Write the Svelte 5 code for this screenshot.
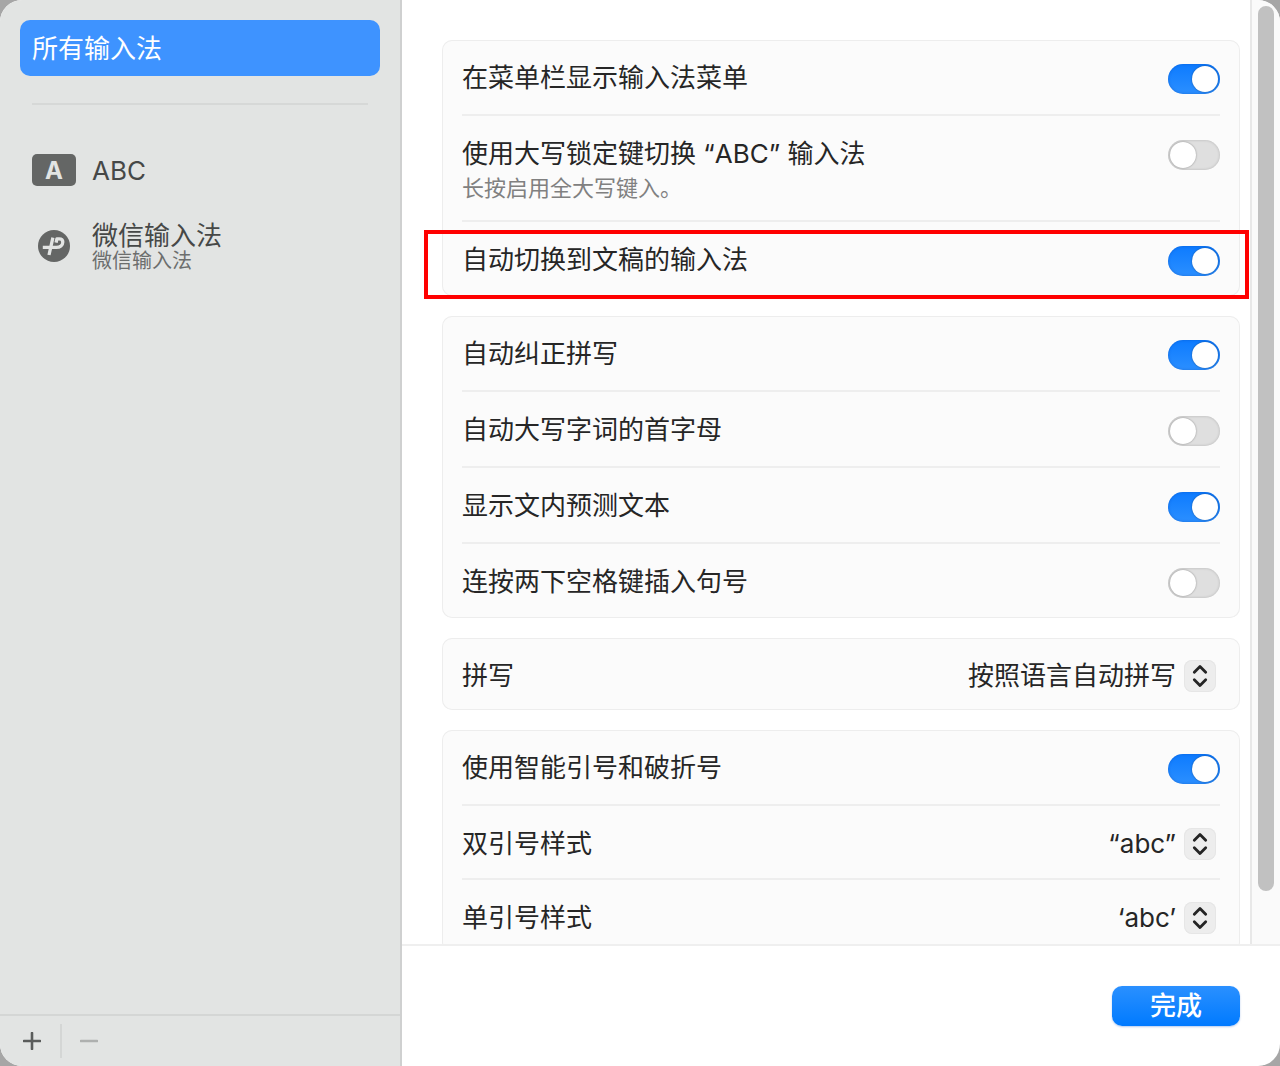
<script lang="ts">
  type Row = {
    id: string;
    label: string;
    hint?: string;
    on?: boolean;
    options?: string[];
    marked?: boolean;
  };

  let groups = $state<Row[][]>([
    [
      { id: 'menu-bar', label: '在菜单栏显示输入法菜单', on: true },
      { id: 'caps-lock', label: '使用大写锁定键切换 “ABC” 输入法', hint: '长按启用全大写键入。', on: false },
      { id: 'auto-switch', label: '自动切换到文稿的输入法', on: true, marked: true }
    ],
    [
      { id: 'auto-correct', label: '自动纠正拼写', on: true },
      { id: 'auto-capital', label: '自动大写字词的首字母', on: false },
      { id: 'inline-predict', label: '显示文内预测文本', on: true },
      { id: 'double-space', label: '连按两下空格键插入句号', on: false }
    ],
    [{ id: 'spelling', label: '拼写', options: ['按照语言自动拼写'] }],
    [
      { id: 'smart-quotes', label: '使用智能引号和破折号', on: true },
      { id: 'double-quotes', label: '双引号样式', options: ['“abc”'] },
      { id: 'single-quotes', label: '单引号样式', options: ['‘abc’'] }
    ]
  ]);
</script>

<div class="window">
  <aside class="sidebar">
    <nav class="sources">
      <button class="all">所有输入法</button>
      <hr />
      <button class="source">
        <span class="icon">
          <span class="key">A</span>
        </span>
        <span class="name">ABC</span>
      </button>
      <button class="source">
        <span class="icon">
          <svg width="32" height="32" viewBox="0 0 32 32" aria-hidden="true">
            <circle cx="16" cy="16" r="16" fill="#646665" />
            <path
              d="M14.9 7.6 L11 25 M4.8 17.4 H18.2 C22.2 17.4 24.8 15.2 24.8 12 C24.8 9.8 23.4 8.9 21.2 8.9 H18.9 L18.1 12.6"
              fill="none"
              stroke="#e2e4e3"
              stroke-width="3.3"
              stroke-linejoin="round"
            />
          </svg>
        </span>
        <span class="names">
          <span class="name">微信输入法</span>
          <span class="detail">微信输入法</span>
        </span>
      </button>
    </nav>
    <div class="tools">
      <button class="tool" aria-label="添加">
        <svg width="18" height="18" viewBox="0 0 18 18">
          <path d="M9 1V17M1 9H17" stroke="#5a5c5b" stroke-width="2.6" stroke-linecap="round" />
        </svg>
      </button>
      <button class="tool" aria-label="移除" disabled>
        <svg width="18" height="18" viewBox="0 0 18 18">
          <path d="M1 9H17" stroke="#aeb0af" stroke-width="2.6" stroke-linecap="round" />
        </svg>
      </button>
    </div>
  </aside>

  <main class="content">
    <div class="body">
      <div class="pane">
        {#each groups as group}
          <section class="card">
            {#each group as row (row.id)}
              <div class="row" class:marked={row.marked}>
                <div class="text">
                  <label for={row.id}>{row.label}</label>
                  {#if row.hint}
                    <span class="hint">{row.hint}</span>
                  {/if}
                </div>
                {#if row.options}
                  <div class="picker">
                    <select id={row.id}>
                      {#each row.options as option}
                        <option>{option}</option>
                      {/each}
                    </select>
                    <svg width="32" height="32" viewBox="0 0 32 32" aria-hidden="true">
                      <path
                        d="M10.3 12.2L16 6.4L21.7 12.2M10.3 19.8L16 25.6L21.7 19.8"
                        fill="none"
                        stroke="#242424"
                        stroke-width="2.8"
                        stroke-linecap="round"
                        stroke-linejoin="round"
                      />
                    </svg>
                  </div>
                {:else}
                  <input class="switch" type="checkbox" role="switch" id={row.id} bind:checked={row.on} />
                {/if}
              </div>
            {/each}
          </section>
        {/each}
      </div>
      <div class="track">
        <div class="thumb"></div>
      </div>
    </div>
    <footer>
      <button class="done">完成</button>
    </footer>
  </main>
</div>

<style>
  :global(body) {
    background: #a6a6a6;
  }

  .window {
    display: flex;
    height: 100vh;
    overflow: hidden;
    border-radius: 22px;
    background: #fff;
    color: #262626;
    font-family: Inter, 'Noto Sans CJK SC', sans-serif;
    font-size: 26px;
    line-height: 30px;
  }

  button,
  select {
    margin: 0;
    padding: 0;
    border: 0;
    background: none;
    color: inherit;
    font: inherit;
  }

  svg {
    display: block;
  }

  /* Sidebar */
  .sidebar {
    display: flex;
    flex-direction: column;
    flex: 0 0 400px;
    border-right: 2px solid #cfd0d0;
    background: #e2e4e3;
    color: #464847;
  }

  .sources {
    display: flex;
    flex-direction: column;
    flex: 1;
    padding: 20px;
  }

  .all {
    height: 56px;
    padding: 2px 12px 0;
    border-radius: 10px;
    background: #3e93ff;
    color: #fff;
    text-align: left;
  }

  hr {
    height: 2px;
    margin: 27px 12px;
    border: 0;
    background: #d6d8d7;
  }

  .source {
    display: flex;
    align-items: center;
    gap: 16px;
    height: 76px;
    padding: 0 12px;
    text-align: left;
  }

  .icon {
    display: flex;
    justify-content: center;
    width: 44px;
  }

  .name {
    padding-top: 2px;
  }

  .key {
    height: 32px;
    width: 44px;
    border-radius: 5px;
    background: #646665;
    color: #e2e4e3;
    font-size: 24px;
    font-weight: 700;
    line-height: 34px;
    text-align: center;
  }

  .names {
    display: flex;
    flex-direction: column;
    padding-top: 2px;
  }

  .names .name {
    line-height: 26px;
  }

  .detail {
    color: #6c6e6d;
    font-size: 20px;
    line-height: 24px;
  }

  .tools {
    display: flex;
    align-items: center;
    height: 50px;
    padding: 0 4px;
    border-top: 2px solid #d4d6d5;
  }

  .tool {
    display: flex;
    align-items: center;
    justify-content: center;
    width: 56px;
    height: 34px;
  }

  .tool + .tool {
    border-left: 2px solid #d4d6d5;
  }

  /* Settings */
  .content {
    display: flex;
    flex: 1;
    flex-direction: column;
    min-width: 0;
  }

  .body {
    display: flex;
    flex: 1;
    min-height: 0;
  }

  .pane {
    display: flex;
    flex: 1;
    flex-direction: column;
    gap: 20px;
    padding: 40px 10px 40px 40px;
    overflow-y: auto;
    scrollbar-width: none;
  }

  .card {
    flex: none;
    padding: 0 20px;
    border-radius: 10px;
    background: #fbfbfb;
    box-shadow: inset 0 0 0 1px #ededed;
  }

  .row {
    display: flex;
    align-items: flex-start;
    justify-content: space-between;
    box-sizing: border-box;
    min-height: 74px;
    padding: 22px 0 14px;
  }

  .row:has(.picker) {
    min-height: 72px;
  }

  .row + .row {
    min-height: 76px;
    border-top: 2px solid #eee;
  }

  .row + .row:has(.picker) {
    min-height: 74px;
  }

  .marked {
    position: relative;
  }

  .marked::after {
    content: '';
    position: absolute;
    inset: 8px -29px -3px -38px;
    border: 4px solid #f00;
    pointer-events: none;
  }

  .text {
    display: flex;
    flex-direction: column;
  }

  label {
    line-height: 32px;
  }

  .hint {
    color: #808080;
    font-size: 22px;
    line-height: 36px;
  }

  .switch {
    appearance: none;
    flex: none;
    width: 52px;
    height: 30px;
    margin: 2px 0 0;
    padding: 2px;
    box-sizing: border-box;
    border-radius: 15px;
    background: #dfdfdf;
    box-shadow: inset 0 0 3px rgba(0, 0, 0, 0.2);
  }

  .switch::before {
    content: '';
    display: block;
    width: 26px;
    height: 26px;
    border-radius: 50%;
    background: #fff;
    box-shadow: 0 0 2px rgba(0, 0, 0, 0.4);
  }

  .switch:checked {
    background: linear-gradient(#0d7bff, #2b8fff);
    box-shadow: inset 0 0 3px rgba(0, 60, 160, 0.4);
  }

  .switch:checked::before {
    margin-left: auto;
  }

  .picker {
    position: relative;
    margin-right: 4px;
  }

  .picker select {
    appearance: none;
    display: block;
    height: 32px;
    padding-right: 40px;
    text-align-last: right;
  }

  .picker svg {
    position: absolute;
    top: 0;
    right: 0;
    border-radius: 8px;
    background: #ededed;
    box-shadow: inset 0 0 0 1px #e6e6e6;
    pointer-events: none;
  }

  .track {
    box-sizing: border-box;
    width: 30px;
    padding: 6px;
    border-left: 2px solid #e8e8e8;
    background: #fafafa;
  }

  .thumb {
    width: 16px;
    height: 95%;
    border-radius: 8px;
    background: #c1c1c1;
  }

  footer {
    display: flex;
    justify-content: flex-end;
    padding: 40px;
    border-top: 2px solid #efefef;
  }

  .done {
    width: 128px;
    height: 40px;
    border-radius: 10px;
    background: linear-gradient(#2a90ff, #007aff);
    box-shadow: 0 1px 2px rgba(0, 80, 200, 0.3);
    color: #fff;
    font-weight: 500;
  }
</style>
